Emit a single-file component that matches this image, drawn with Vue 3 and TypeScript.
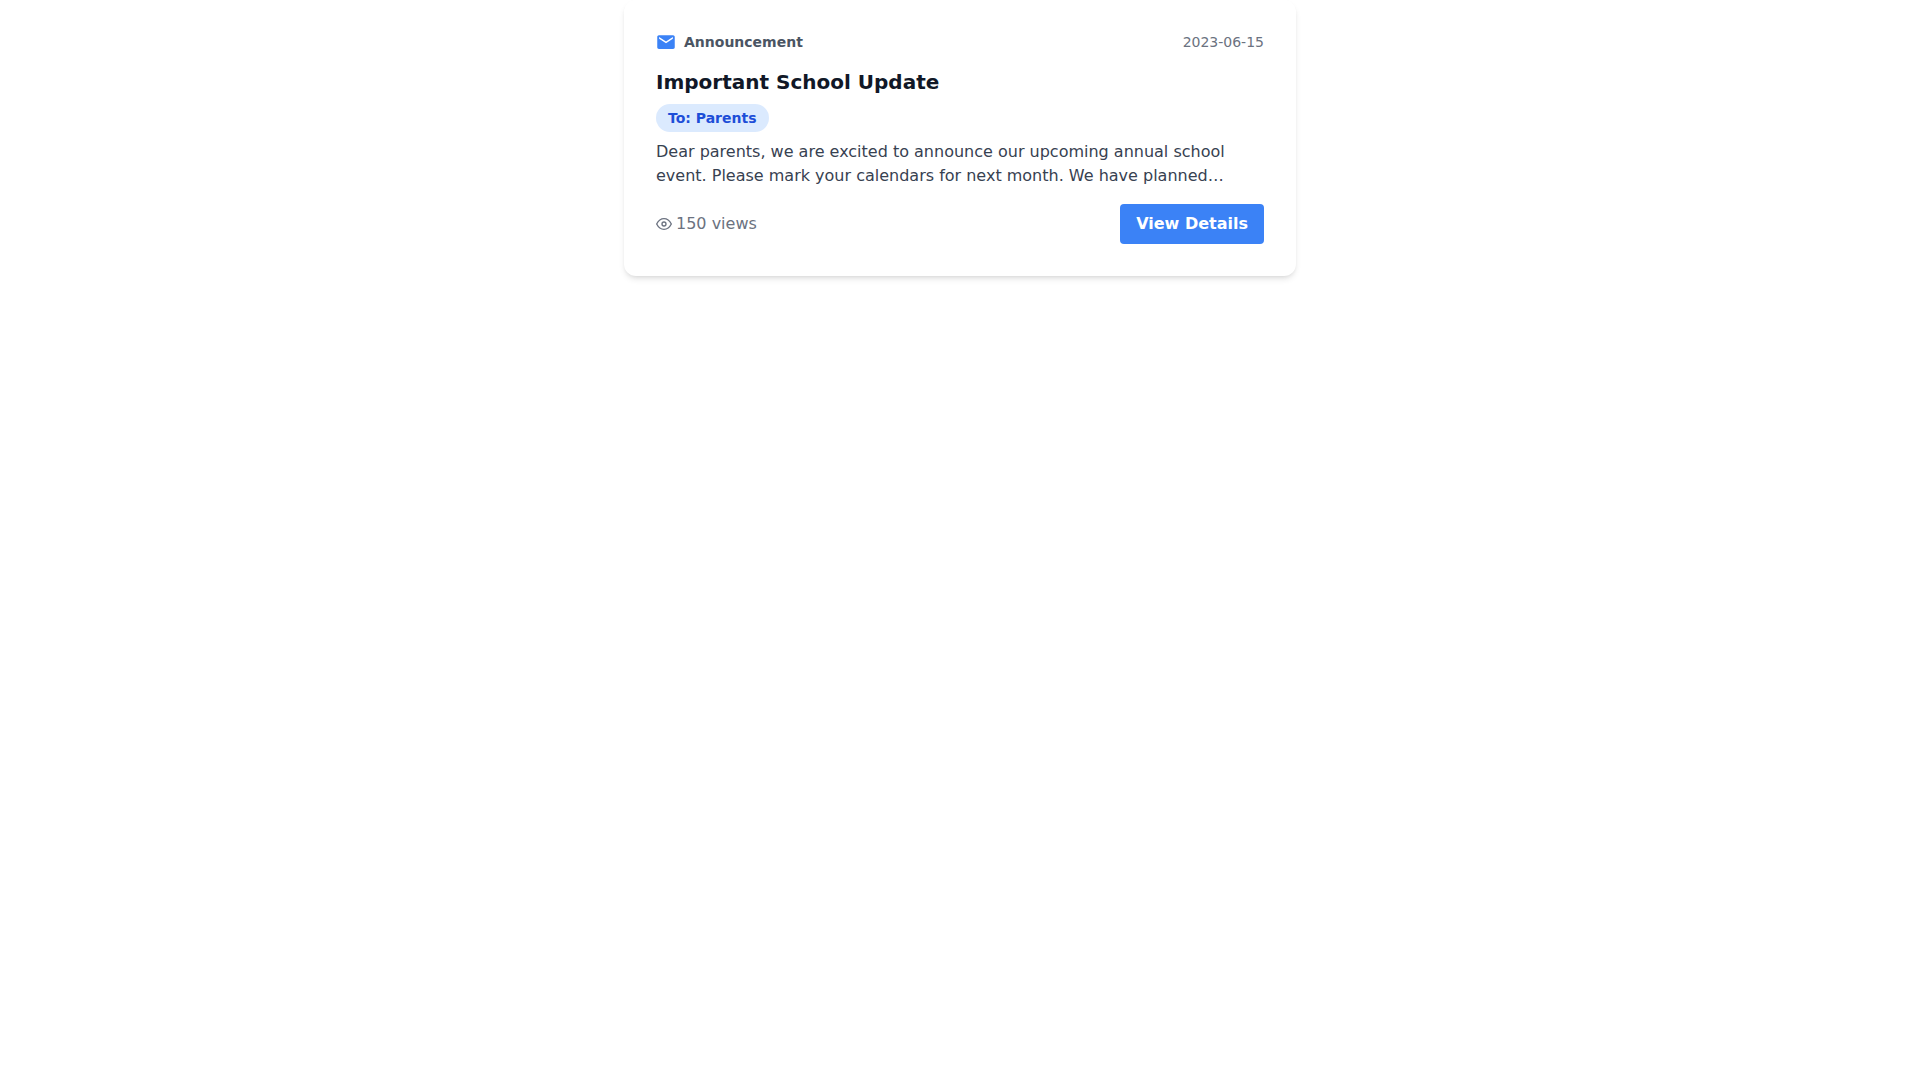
<script setup lang="ts">
interface Announcement {
  kind: string
  date: string
  title: string
  audience: string
  body: string
  views: number
}

const item: Announcement = {
  kind: 'Announcement',
  date: '2023-06-15',
  title: 'Important School Update',
  audience: 'Parents',
  body: 'Dear parents, we are excited to announce our upcoming annual school event. Please mark your calendars for next month. We have planned…',
  views: 150,
}
</script>

<template>
  <main class="page">
    <article class="card">
      <header class="row">
        <div class="kind">
          <svg class="mail" viewBox="0 0 512 512" fill="currentColor" aria-hidden="true">
            <path d="M437.332 80H74.668C51.199 80 32 99.198 32 122.667v266.666C32 412.802 51.199 432 74.668 432h362.664C460.801 432 480 412.802 480 389.333V122.667C480 99.198 460.801 80 437.332 80zM432 170.667L256 288 80 170.667V128l176 117.333L432 128v42.667z" />
          </svg>
          <span>{{ item.kind }}</span>
        </div>
        <time class="date" :datetime="item.date">{{ item.date }}</time>
      </header>
      <h2 class="title">{{ item.title }}</h2>
      <span class="badge">To: {{ item.audience }}</span>
      <p class="body">{{ item.body }}</p>
      <footer class="row">
        <div class="views">
          <svg class="eye" viewBox="0 0 24 24" fill="none" stroke="currentColor" stroke-width="2" stroke-linecap="round" stroke-linejoin="round" aria-hidden="true">
            <path d="M1 12s4-8 11-8 11 8 11 8-4 8-11 8-11-8-11-8z" />
            <circle cx="12" cy="12" r="3" />
          </svg>
          <span>{{ item.views }} views</span>
        </div>
        <button class="details" type="button">View Details</button>
      </footer>
    </article>
  </main>
</template>

<style>
body {
  background: #fff;
}
</style>

<style scoped>
.page {
  min-height: 100vh;
}
.card {
  box-sizing: border-box;
  max-width: 672px;
  margin: 0 auto;
  padding: 32px;
  border-radius: 12px;
  background: #fff;
  box-shadow: 0 4px 6px -1px rgb(0 0 0 / 0.1), 0 2px 4px -2px rgb(0 0 0 / 0.1);
  color: #374151;
  font: 16px/24px "DejaVu Sans", sans-serif;
}
.row {
  display: flex;
  align-items: center;
  justify-content: space-between;
}
.kind {
  display: flex;
  align-items: center;
  gap: 8px;
  color: #4b5563;
  font-size: 14px;
  line-height: 20px;
  font-weight: 700;
}
.mail {
  width: 20px;
  height: 20px;
  color: #3b82f6;
}
.date {
  color: #6b7280;
  font-size: 14px;
  line-height: 20px;
}
.title {
  margin: 16px 0 8px;
  color: #111827;
  font-size: 20px;
  line-height: 28px;
  font-weight: 700;
}
.badge {
  display: inline-block;
  padding: 4px 12px;
  border-radius: 999px;
  background: #dbeafe;
  color: #1d4ed8;
  font-size: 14px;
  line-height: 20px;
  font-weight: 700;
}
.body {
  margin: 8px 0 16px;
}
.views {
  display: flex;
  align-items: center;
  gap: 4px;
  color: #6b7280;
}
.eye {
  width: 16px;
  height: 16px;
}
.details {
  padding: 8px 16px;
  border: 0;
  border-radius: 4px;
  background: #3b82f6;
  color: #fff;
  font: inherit;
  font-weight: 700;
  cursor: pointer;
}
</style>
